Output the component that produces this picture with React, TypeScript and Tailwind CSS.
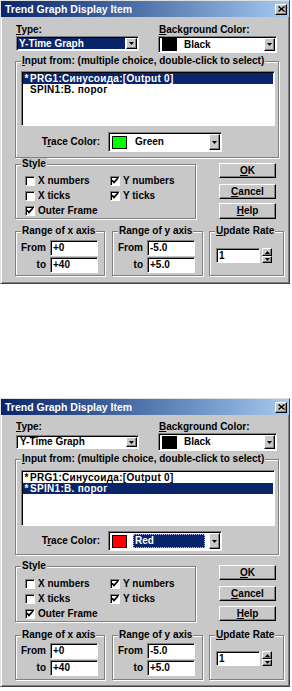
import React from 'react';

type Variant = 'a' | 'b';

const raised =
  'border border-t-white border-l-white border-r-black border-b-black shadow-[inset_-1px_-1px_0_#808080]';
const sunken =
  'border border-t-[#808080] border-l-[#808080] border-r-white border-b-white shadow-[inset_1px_1px_0_#000]';
const navy = 'bg-[#0a246a]';

// spacing per screenshot (they were captured at slightly different sizes)
const S = {
  a: {
    lblMt: 'mt-[7px]', typeH: 'h-[15px]', typeMt: 'mt-0', bgH: 'h-[17px]', inMt: 'mt-[2px]',
    listMt: 'mt-[4px]', listH: 'h-[55px]', traceMt: 'mt-[6px]', inPb: 'pb-[5px]', styleMt: 'mt-0',
    rowsMt: 'mt-[3px]', okMt: 'mt-[5px]', cancelMt: 'mt-[6px]', helpMt: 'mt-[4px]', helpH: 'h-[16px]',
    rangeMt: 'mt-[6px]', editMt: 'mt-[3px]', rangePb: 'pb-[2px]', updMt: 'mt-[11px]', pb: 'pb-[7px]',
  },
  b: {
    lblMt: 'mt-[6px]', typeH: 'h-[14px]', typeMt: 'mt-[2px]', bgH: 'h-[18px]', inMt: 'mt-[2px]',
    listMt: 'mt-[5px]', listH: 'h-[56px]', traceMt: 'mt-[5px]', inPb: 'pb-[3px]', styleMt: 'mt-[5px]',
    rowsMt: 'mt-[4px]', okMt: 'mt-[5px]', cancelMt: 'mt-[6px]', helpMt: 'mt-[5px]', helpH: 'h-[15px]',
    rangeMt: 'mt-[7px]', editMt: 'mt-[2px]', rangePb: 'pb-[3px]', updMt: 'mt-[10px]', pb: 'pb-[6px]',
  },
};

function U({ children }: { children: React.ReactNode }) {
  return <span className="underline underline-offset-[1px] decoration-1">{children}</span>;
}

function DropBtn() {
  return (
    <div className={`w-[11px] h-full shrink-0 bg-[#c8c8c8] ${raised} flex items-center justify-center`}>
      <svg width="5" height="3" viewBox="0 0 5 3">
        <path d="M0 0h5L2.5 3z" fill="#000" />
      </svg>
    </div>
  );
}

function Combo({ cls, children }: { cls: string; children: React.ReactNode }) {
  return (
    <div className={`flex bg-white ${sunken} p-[1px] ${cls}`}>
      <div className="flex-1 min-w-0 h-full flex items-center">{children}</div>
      <DropBtn />
    </div>
  );
}

function Swatch({ color }: { color: string }) {
  return <div className={`w-[15px] h-[13px] shrink-0 ml-[2px] border border-black ${color}`} />;
}

function Group({ title, cls, children }: { title: React.ReactNode; cls: string; children: React.ReactNode }) {
  return (
    <fieldset className={`border border-[#808080] shadow-[inset_1px_1px_0_#fff,1px_1px_0_#fff] ${cls}`}>
      <legend className="ml-[5px] px-[1px] bg-[#c8c8c8] text-[10px] leading-[12px]">{title}</legend>
      {children}
    </fieldset>
  );
}

function Check({ checked, label }: { checked?: boolean; label: string }) {
  return (
    <div className="flex items-center h-[15px]">
      <div className={`w-[10px] h-[10px] shrink-0 bg-white ${sunken} flex items-center justify-center`}>
        {checked && (
          <svg width="8" height="7" viewBox="0 0 8 7">
            <path d="M1 3.2l2 2.2L7 1" stroke="#000" strokeWidth="1.7" fill="none" />
          </svg>
        )}
      </div>
      <span className="ml-[3px]">{label}</span>
    </div>
  );
}

function Button({ cls, children }: { cls: string; children: React.ReactNode }) {
  return (
    <div className={`w-[57px] ${cls} bg-[#c8c8c8] ${raised} flex items-center justify-center`}>{children}</div>
  );
}

function Edit({ value, cls }: { value: string; cls: string }) {
  return <div className={`bg-white ${sunken} pl-[2px] flex items-center ${cls}`}>{value}</div>;
}

function Range({ from, to, v }: { from: string; to: string; v: Variant }) {
  const s = S[v];
  return (
    <div className={s.editMt}>
      <div className="flex items-center">
        <span className="w-[30px] text-right">From</span>
        <Edit value={from} cls="ml-[4px] w-[48px] h-[16px]" />
      </div>
      <div className="flex items-center mt-[1px]">
        <span className="w-[30px] text-right">to</span>
        <Edit value={to} cls="ml-[4px] w-[48px] h-[16px]" />
      </div>
    </div>
  );
}

function Dialog({ v }: { v: Variant }) {
  const s = S[v];
  const items = [
    { star: '*', text: 'PRG1:Синусоида:[Output 0]' },
    { star: v === 'a' ? '' : '*', text: 'SPIN1:В. порог' },
  ];
  const sel = v === 'a' ? 0 : 1;

  return (
    <div className={`w-[290px] bg-[#c8c8c8] border border-t-[#e0e0e0] border-l-[#e0e0e0] border-r-[#404040] border-b-[#404040] shadow-[inset_1px_1px_0_#fff,inset_-1px_-1px_0_#808080] ${s.pb}`}>
      {/* title bar */}
      <div className="h-[16px] bg-linear-to-r from-[#0a246a] to-[#a6caf0] flex items-center justify-between pl-[4px] pr-[2px]">
        <span className="text-white text-[10.5px] font-bold">Trend Graph Display Item</span>
        <div className={`w-[12px] h-[11px] bg-[#c8c8c8] ${raised} flex items-center justify-center`}>
          <svg width="7" height="6" viewBox="0 0 7 6">
            <path d="M0.5 0.5l6 5M6.5 0.5l-6 5" stroke="#000" strokeWidth="1.4" />
          </svg>
        </div>
      </div>

      {/* type + background */}
      <div className={`flex ${s.lblMt}`}>
        <div className="ml-[15px] w-[142px]">
          <div className="h-[12px]"><U>T</U>ype:</div>
          <Combo cls={`${s.typeMt} w-[123px] ${s.typeH}`}>
            {v === 'a' ? (
              <div className={`h-full flex-1 mr-[1px] ${navy} text-white pl-[1px] flex items-center`}>Y-Time Graph</div>
            ) : (
              <div className="pl-[2px]">Y-Time Graph</div>
            )}
          </Combo>
        </div>
        <div className="w-[120px]">
          <div className="h-[12px] ml-[1px]"><U>B</U>ackground Color:</div>
          <Combo cls={`w-[119px] ${s.bgH}`}>
            <Swatch color="bg-black" />
            <span className="ml-[7px]">Black</span>
          </Combo>
        </div>
      </div>

      {/* input from */}
      <Group
        title={<><U>I</U>nput from: (multiple choice, double-click to select)</>}
        cls={`ml-[14px] w-[264px] ${s.inMt} ${s.inPb}`}
      >
        <div className={`ml-[5px] w-[254px] ${s.listMt} ${s.listH} bg-white ${sunken} p-[1px] overflow-hidden`}>
          {items.map((it, i) => (
            <div
              key={it.text}
              className={`h-[11px] leading-[11px] text-[10px] tracking-[0.3px] flex overflow-hidden ${i === sel ? `${navy} text-white` : ''}`}
            >
              <span className="w-[7px] text-center">{it.star}</span>
              <span>{it.text}</span>
            </div>
          ))}
        </div>
        <div className={`flex items-center ${s.traceMt}`}>
          <span className="w-[84px] text-right">
            T<U>r</U>ace Color:
          </span>
          <Combo cls="ml-[8px] w-[114px] h-[20px]">
            <Swatch color={v === 'a' ? 'bg-[#00ff00]' : 'bg-[#ff0000]'} />
            {v === 'a' ? (
              <span className="ml-[8px]">Green</span>
            ) : (
              <span className={`ml-[6px] w-[72px] h-[14px] ${navy} text-white border border-dotted border-[#c0c0ff] pl-[1px] flex items-center`}>
                Red
              </span>
            )}
          </Combo>
        </div>
      </Group>

      {/* style + buttons */}
      <div className={`flex items-start ${s.styleMt}`}>
        <Group title="Style" cls="ml-[14px] w-[178px]">
          <div className={`ml-[9px] grid grid-cols-[85px_85px] ${s.rowsMt}`}>
            <Check label="X numbers" />
            <Check checked label="Y numbers" />
            <Check label="X ticks" />
            <Check checked label="Y ticks" />
            <Check checked label="Outer Frame" />
          </div>
        </Group>
        <div className="ml-[23px] flex flex-col">
          <Button cls={`${s.okMt} h-[15px]`}><U>O</U>K</Button>
          <Button cls={`${s.cancelMt} h-[15px]`}><U>C</U>ancel</Button>
          <Button cls={`${s.helpMt} ${s.helpH}`}><U>H</U>elp</Button>
        </div>
      </div>

      {/* ranges + update rate */}
      <div className={`flex ${s.rangeMt}`}>
        <Group title="Range of x axis" cls={`ml-[14px] w-[90px] ${s.rangePb}`}>
          <Range from="+0" to="+40" v={v} />
        </Group>
        <Group title="Range of y axis" cls={`ml-[7px] w-[91px] ${s.rangePb}`}>
          <Range from="-5.0" to="+5.0" v={v} />
        </Group>
        <Group title={<><U>U</U>pdate Rate</>} cls="ml-[6px] w-[75px]">
          <div className={`ml-[6px] flex ${s.updMt}`}>
            <Edit value="1" cls="w-[44px] h-[15px]" />
            <div className="ml-[2px] w-[10px] h-[15px] flex flex-col">
              <div className={`h-[8px] bg-[#c8c8c8] ${raised} flex items-center justify-center`}>
                <svg width="5" height="3" viewBox="0 0 5 3"><path d="M0 3h5L2.5 0z" fill="#000" /></svg>
              </div>
              <div className={`h-[7px] bg-[#c8c8c8] ${raised} flex items-center justify-center`}>
                <svg width="5" height="3" viewBox="0 0 5 3"><path d="M0 0h5L2.5 3z" fill="#000" /></svg>
              </div>
            </div>
          </div>
        </Group>
      </div>
    </div>
  );
}

export default function App() {
  return (
    <div className="w-[292px] h-[691px] bg-white overflow-hidden font-['Liberation_Sans',Arial,sans-serif] font-bold text-[10px] leading-[12px] text-black">
      <Dialog v="a" />
      <div className="mt-[114px]">
        <Dialog v="b" />
      </div>
    </div>
  );
}
